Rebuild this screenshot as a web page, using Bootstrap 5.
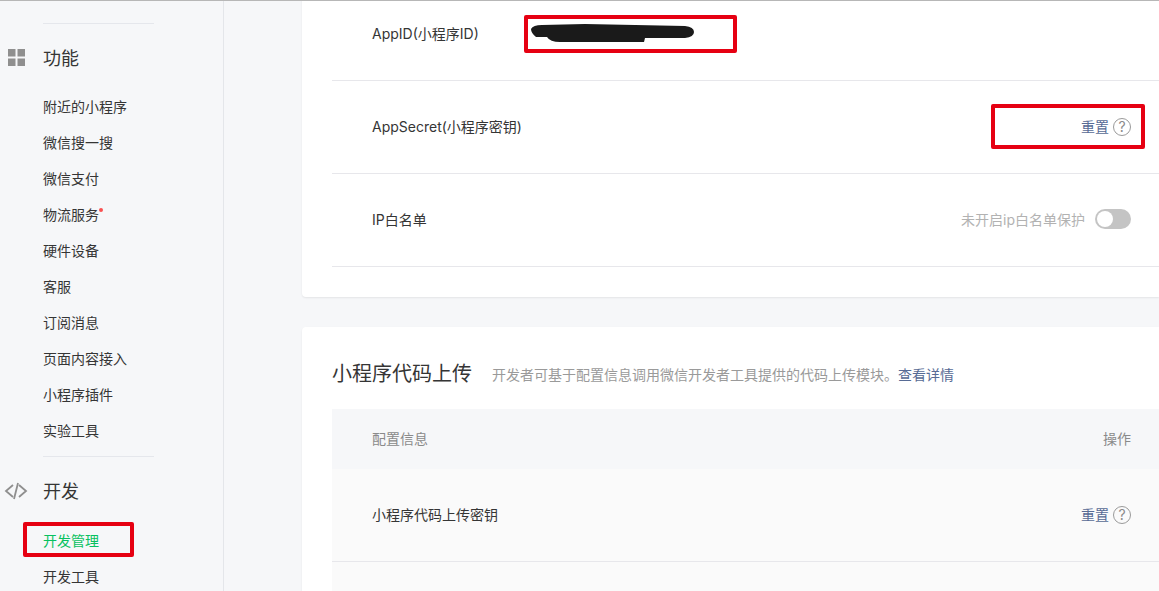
<!DOCTYPE html>
<html lang="zh-CN">
<head>
<meta charset="utf-8">
<title>开发管理</title>
<link rel="stylesheet" href="https://cdn.jsdelivr.net/npm/bootstrap@5.3.0/dist/css/bootstrap.min.css">
<style>
html,body{height:591px;overflow:hidden}
body{background:#f6f7f9;font-family:Inter,"Noto Sans CJK SC",sans-serif;font-size:14px;color:#353535;position:relative}
.topline{height:1px;background:#b7b7b7}
.shell{height:590px;overflow:hidden}
.sidenav{width:224px;flex:none;border-right:1px solid #e4e6ea;padding-top:22px}
.sep{height:1px;background:#e5e7ec;margin-left:43px;width:111px}
.sep2{margin-top:7px}
.groupttl{height:32px;margin-top:19px;margin-bottom:14px;font-size:18px;line-height:32px;position:relative;padding-left:43px;color:#353535}
.groupttl.g2{margin-bottom:15px}
.groupttl svg{position:absolute;top:0;left:0}
.sideitem{display:block;height:36px;line-height:36px;padding-left:43px;color:#353535;text-decoration:none}
.sideitem.on{color:#07c160}
.dot{display:inline-block;width:4px;height:4px;border-radius:50%;background:#fa5151;vertical-align:8px}
.mainpane{flex:1;min-width:0;padding-left:78px;margin-top:-13px}
.panel{background:#fff;border-radius:4px 0 0 4px;box-shadow:0 1px 2px rgba(0,0,0,.08);padding-left:30px}
.panel+.panel{margin-top:30px;padding-top:30px}
.cfgrow{height:93px;border-bottom:1px solid #e7e7eb;padding:0 28px 0 40px}
.cfgrow.tint{background:#fafafa}
.tailfill{height:60px;background:#fafafa}
.endgap{height:30px}
.tx{padding-bottom:2px}
.reset{color:#576b95;text-decoration:none}
.qmark{width:18px;height:18px;border:1px solid #9a9a9a;border-radius:50%;color:#8a8a8a;font-size:14px;line-height:16px;text-align:center;margin-left:4px;display:inline-block}
.hint{color:#b2b2b2;margin-right:10px}
.toggle{width:36px;height:20px;border-radius:10px;background:#c4c4c4;padding:2px;display:block;margin-top:-2px}
.toggle i{display:block;width:16px;height:16px;border-radius:50%;background:#fff}
.hd{height:52px;display:flex;align-items:flex-start}
.hd h2{font-size:20px;font-weight:400;margin:3px 20px 0 0;color:#353535;line-height:28px}
.hd span{color:#9a9a9a;line-height:24px;margin-top:6px}
.hd a{color:#576b95;text-decoration:none}
.thead{height:60px;background:#f6f7f9;padding:0 28px 0 40px;color:#8a8a8a}
.mark1{position:absolute;border:4px solid #e60012;border-radius:2px;pointer-events:none}
.m-a{left:524px;top:15px;width:213px;height:38px}
.m-b{left:991px;top:104px;width:154px;height:45px}
.m-c{left:23px;top:522px;width:111px;height:35px}
.blot{position:absolute;left:530px;top:23px;width:166px;height:21px}
</style>
</head>
<body>
<div class="topline"></div>
<div class="shell d-flex">
  <nav class="sidenav">
    <div class="sep"></div>
    <div class="groupttl">
      <svg width="34" height="32" viewBox="0 0 34 32"><g fill="#8f8f8f"><rect x="8" y="6" width="7.500" height="7.500"/><rect x="17.500" y="6" width="7.500" height="7.500"/><rect x="8" y="15.500" width="7.500" height="7.500"/><rect x="17.500" y="15.500" width="7.500" height="7.500"/></g></svg>
      功能
    </div>
    <a class="sideitem" href="#">附近的小程序</a>
    <a class="sideitem" href="#">微信搜一搜</a>
    <a class="sideitem" href="#">微信支付</a>
    <a class="sideitem" href="#">物流服务<span class="dot"></span></a>
    <a class="sideitem" href="#">硬件设备</a>
    <a class="sideitem" href="#">客服</a>
    <a class="sideitem" href="#">订阅消息</a>
    <a class="sideitem" href="#">页面内容接入</a>
    <a class="sideitem" href="#">小程序插件</a>
    <a class="sideitem" href="#">实验工具</a>
    <div class="sep sep2"></div>
    <div class="groupttl g2">
      <svg width="34" height="32" viewBox="0 0 34 32"><g fill="none" stroke="#8f8f8f" stroke-width="1.800"><path d="M13 9 L6 15 L13 21"/><path d="M19 9 L26 15 L19 21"/><path d="M18 7 L14 23"/></g></svg>
      开发
    </div>
    <a class="sideitem on" href="#">开发管理</a>
    <a class="sideitem" href="#">开发工具</a>
  </nav>
  <main class="mainpane">
    <section class="panel">
      <div class="cfgrow d-flex align-items-center"><span class="tx">AppID(小程序ID)</span></div>
      <div class="cfgrow d-flex align-items-center justify-content-between"><span class="tx">AppSecret(小程序密钥)</span><span class="d-flex align-items-center"><a class="reset tx" href="#">重置</a><span class="qmark">?</span></span></div>
      <div class="cfgrow d-flex align-items-center justify-content-between"><span class="tx">IP白名单</span><span class="d-flex align-items-center"><span class="hint tx">未开启ip白名单保护</span><span class="toggle"><i></i></span></span></div>
      <div class="endgap"></div>
    </section>
    <section class="panel">
      <div class="hd"><h2>小程序代码上传</h2><span>开发者可基于配置信息调用微信开发者工具提供的代码上传模块。<a href="#">查看详情</a></span></div>
      <div class="thead d-flex align-items-center justify-content-between"><span class="tx">配置信息</span><span class="tx">操作</span></div>
      <div class="cfgrow tint d-flex align-items-center justify-content-between"><span class="tx">小程序代码上传密钥</span><span class="d-flex align-items-center"><a class="reset tx" href="#">重置</a><span class="qmark">?</span></span></div>
      <div class="tailfill"></div>
    </section>
  </main>
</div>
<svg class="blot" viewBox="0 0 166 21"><path d="M1 6 Q3 2 12 2 L55 1 L155 3 Q164 4 164 9 Q164 14 155 15 L115 15 L114 19 L30 19 Q20 19 17 14 L6 14 Q1 10 1 6Z" fill="#1a1a1a"/></svg>
<div class="mark1 m-a"></div>
<div class="mark1 m-b"></div>
<div class="mark1 m-c"></div>
</body>
</html>
